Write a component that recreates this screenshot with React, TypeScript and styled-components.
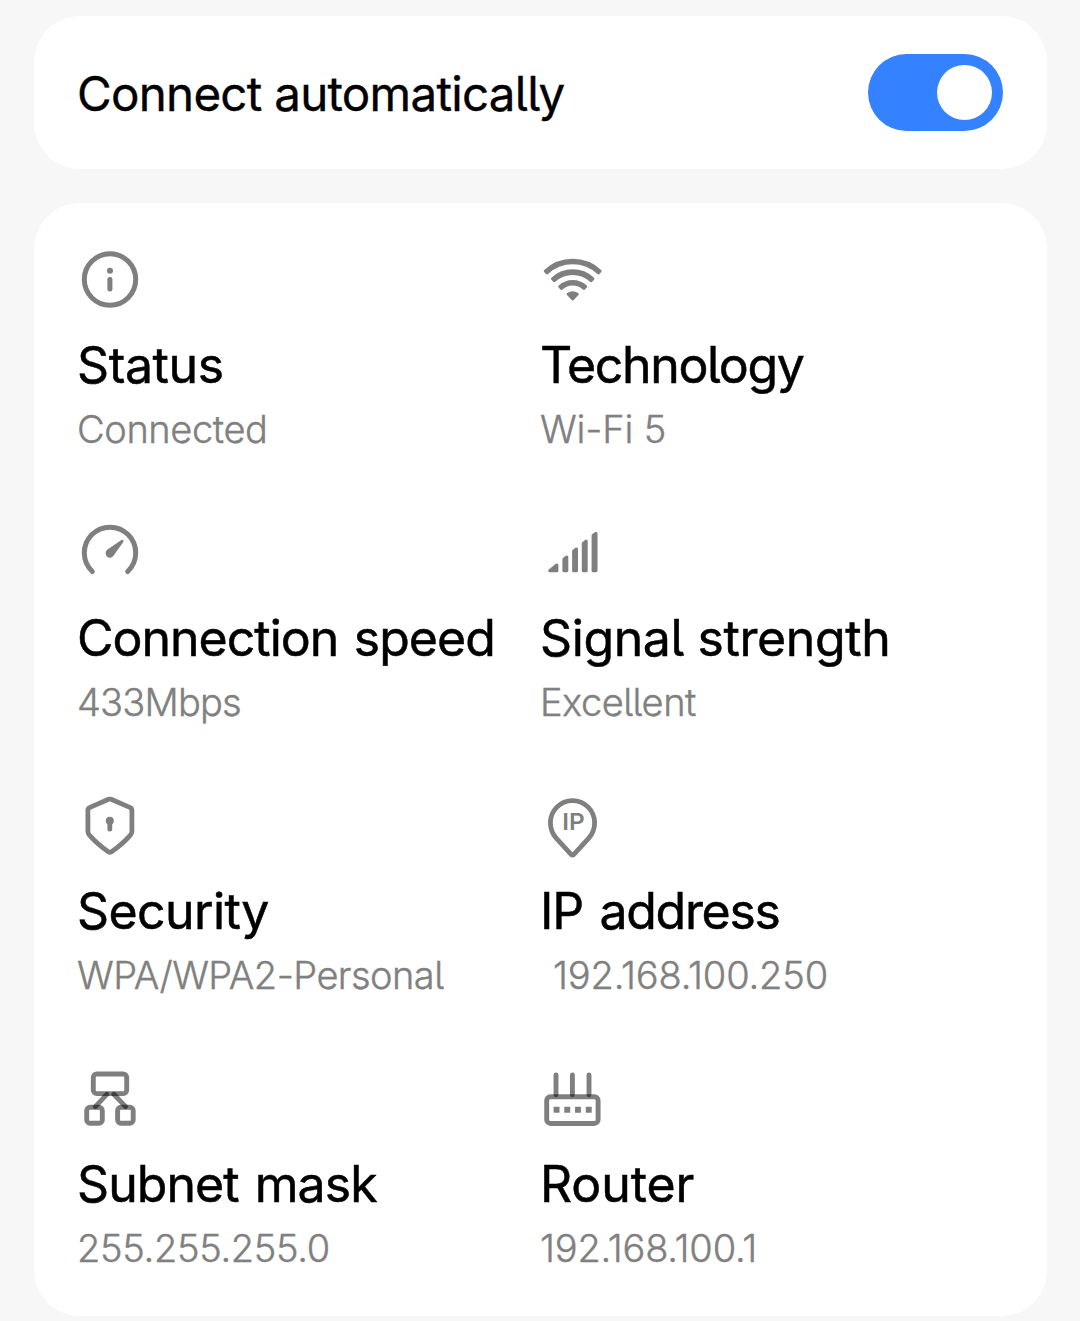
import React, { useState } from "react";
import styled, { createGlobalStyle } from "styled-components";

const GlobalStyle = createGlobalStyle`
  * { box-sizing: border-box; }
  body {
    margin: 0;
    background: #f7f7f7;
    font-family: Inter, "Noto Sans", sans-serif;
    font-feature-settings: "cv05" 1;
  }
`;

const Page = styled.main`
  display: flex;
  flex-direction: column;
  gap: 34px;
  width: 1080px;
  height: 1321px;
  padding: 16px 33.5px 0;
  overflow: hidden;
`;

const Card = styled.section`
  background: #fff;
  border-radius: 46px;
`;

const SwitchRow = styled(Card)`
  display: flex;
  align-items: center;
  justify-content: space-between;
  height: 153px;
  padding: 0 43.5px 1px 43.5px;
`;

const Text = styled.span<{ $tracking?: number; $wordGap?: number }>`
  display: block;
  white-space: pre;
  letter-spacing: ${(p) => p.$tracking ?? 0}px;
  word-spacing: ${(p) => p.$wordGap ?? 0}px;
`;

const RowTitle = styled(Text)`
  padding-top: 4px;
  font-size: 47.5px;
  font-weight: 400;
  line-height: 58px;
  color: #000;
  -webkit-text-stroke: 0.35px #000;
`;

const Toggle = styled.button<{ $on: boolean }>`
  display: flex;
  align-items: center;
  justify-content: ${(p) => (p.$on ? "flex-end" : "flex-start")};
  width: 135px;
  height: 77px;
  padding: 0 11px;
  border: 0;
  border-radius: 39px;
  background: ${(p) => (p.$on ? "#3482ff" : "#e0e0e0")};
`;

const Knob = styled.span`
  width: 55px;
  height: 55px;
  border-radius: 50%;
  background: #fff;
`;

const Details = styled(Card)`
  display: grid;
  grid-template-columns: 463px 1fr;
  grid-auto-rows: 203px;
  row-gap: 70px;
  height: 1113px;
  padding: 45px 0 0 43.5px;
`;

const Item = styled.div`
  display: flex;
  flex-direction: column;
`;

const Icon = styled.svg`
  display: block;
  width: 64px;
  height: 64px;
  margin-left: 1px;
  color: #7f7f7f;
  overflow: visible;
`;

const Label = styled(Text)`
  margin-top: 23px;
  font-size: 50px;
  font-weight: 400;
  line-height: 60px;
  color: #000;
  -webkit-text-stroke: 0.5px #000;
`;

const Value = styled(Text)<{ $indent?: number }>`
  margin-top: 11px;
  padding-left: ${(p) => p.$indent ?? 0}px;
  font-size: 38px;
  font-weight: 300;
  line-height: 46px;
  color: #808080;
  -webkit-text-stroke: 0.4px #808080;
`;

const InfoIcon = () => (
  <Icon viewBox="0 0 64 64" fill="currentColor">
    <circle cx="32" cy="31.5" r="25.7" fill="none" stroke="currentColor" strokeWidth="5" />
    <circle cx="32" cy="22.7" r="3" />
    <rect x="29.4" y="29" width="5" height="14.6" rx="2.3" />
  </Icon>
);

/* Annular segment centred on the vertical axis above (cx, cy). */
function band(cx: number, cy: number, inner: number, outer: number, angle: number) {
  const s = Math.sin(angle);
  const c = Math.cos(angle);
  return `M${cx - outer * s} ${cy - outer * c}A${outer} ${outer} 0 0 1 ${cx + outer * s} ${cy - outer * c}L${cx + inner * s} ${cy - inner * c}A${inner} ${inner} 0 0 0 ${cx - inner * s} ${cy - inner * c}Z`;
}

const WifiIcon = () => (
  <Icon viewBox="0 0 64 64" fill="currentColor" stroke="currentColor" strokeWidth="2.8" strokeLinejoin="round">
    {[39, 28.4, 17.8].map((r) => (
      <path key={r} d={band(31.7, 52.5, r - 1.4, r + 1.4, 0.75)} />
    ))}
    <path d="M27 46.1Q31.7 43.2 36.4 46.1L31.7 50.9Z" />
  </Icon>
);

const SpeedIcon = () => (
  <Icon viewBox="0 0 64 64" fill="currentColor">
    <path d="M14.3 50.5A25.7 25.7 0 1 1 49.7 50.5" fill="none" stroke="currentColor" strokeWidth="5" strokeLinecap="round" />
    <path d="M43.4 19C44.8 18.1 46.3 19.7 45.3 21.1L35.3 34.9C33.7 37 30.7 37.3 28.9 35.4C27.1 33.5 27.2 30.4 29.5 28.6Z" />
  </Icon>
);

const SIGNAL_BARS = [
  [21.4, 34.3],
  [31.1, 26.3],
  [40.8, 18.4],
  [50.6, 10.6],
];

const SignalIcon = () => (
  <Icon viewBox="0 0 64 64" fill="currentColor" stroke="currentColor" strokeWidth="3.2" strokeLinejoin="round">
    <path d="M8.8 49.7L15.8 44.1V49.7Z" />
    {SIGNAL_BARS.map(([x, top]) => (
      <path key={x} d={`M${x + 1.6} ${top + 4}L${x + 4.3} ${top + 1.8}V49.7H${x + 1.6}Z`} />
    ))}
  </Icon>
);

const ShieldIcon = () => (
  <Icon viewBox="0 0 64 64" fill="currentColor">
    <path
      d="M30.6 5.3Q31.9 4.8 33.2 5.3L52.3 13.6Q53.9 14.4 53.9 16.2V37.2Q53.9 39.6 52.4 41.2Q43.5 51.2 33.5 57.7Q31.9 58.7 30.3 57.7Q20.3 51.2 11.4 41.2Q9.9 39.6 9.9 37.2V16.2Q9.9 14.4 11.5 13.6Z"
      fill="none"
      stroke="currentColor"
      strokeWidth="4.8"
      strokeLinejoin="round"
    />
    <circle cx="31.8" cy="26.8" r="4" />
    <rect x="29.4" y="27" width="4.8" height="10.4" rx="1.8" />
  </Icon>
);

const PinText = styled.text`
  font-size: 23px;
  font-weight: 600;
`;

const IpIcon = () => (
  <Icon viewBox="0 0 64 64" fill="currentColor">
    <path
      d="M31.5 61.2Q30.9 61.2 30.3 60.6L15.2 44.2C11.3 39.8 9.4 34.6 9.4 28.8A22.1 22.1 0 0 1 53.6 28.8C53.6 34.6 51.7 39.8 47.8 44.2L32.7 60.6Q32.1 61.2 31.5 61.2Z"
      fill="none"
      stroke="currentColor"
      strokeWidth="4.8"
      strokeLinejoin="round"
    />
    <PinText x="21.2" y="36.2" textLength="22.4" lengthAdjust="spacingAndGlyphs">IP</PinText>
  </Icon>
);

const SubnetIcon = () => (
  <Icon viewBox="0 0 64 64" fill="none" stroke="#000" strokeOpacity="0.5" strokeWidth="4.9">
    <rect x="15.3" y="7" width="33.4" height="19.6" rx="3.4" />
    <rect x="8.7" y="40.3" width="15.6" height="16" rx="3.4" />
    <rect x="39.6" y="40.3" width="15.6" height="16" rx="3.4" />
    <path d="M28.8 27.3L17.4 39.6M35.8 27.3L47.6 39.6" strokeLinecap="round" />
  </Icon>
);

const RouterIcon = () => (
  <Icon viewBox="0 0 64 64" fill="none" stroke="#000" strokeOpacity="0.5" strokeWidth="4.9">
    <rect x="5.7" y="29.7" width="51.4" height="26.8" rx="3.8" />
    <path d="M15 8V27.8M31.4 8V27.8M48 8V27.8" strokeLinecap="round" />
    {[12.6, 23.3, 34, 44.8].map((x) => (
      <rect key={x} x={x} y="39.8" width="5.9" height="5.9" rx="0.5" fill="#000" fillOpacity="0.5" stroke="none" />
    ))}
  </Icon>
);

interface Detail {
  icon: React.FC;
  label: string;
  value: string;
  labelTracking?: number;
  labelWordGap?: number;
  valueTracking?: number;
  indent?: number;
}

const DETAILS: Detail[] = [
  { icon: InfoIcon, label: "Status", value: "Connected", labelTracking: -0.4, valueTracking: -0.4 },
  { icon: WifiIcon, label: "Technology", value: "Wi-Fi 5", labelTracking: -1.35, valueTracking: -0.15 },
  { icon: SpeedIcon, label: "Connection speed", value: "433Mbps", labelTracking: -1.0, labelWordGap: 2.5, valueTracking: -0.8 },
  { icon: SignalIcon, label: "Signal strength", value: "Excellent", labelTracking: -0.4, valueTracking: -0.5 },
  { icon: ShieldIcon, label: "Security", value: "WPA/WPA2-Personal", labelTracking: -0.6, valueTracking: -0.55 },
  { icon: IpIcon, label: "IP address", value: "192.168.100.250", labelTracking: -1.3, labelWordGap: 4, valueTracking: -0.15, indent: 13 },
  { icon: SubnetIcon, label: "Subnet mask", value: "255.255.255.0", labelTracking: -0.95, labelWordGap: 3, valueTracking: -0.3 },
  { icon: RouterIcon, label: "Router", value: "192.168.100.1", labelTracking: -0.1, valueTracking: -0.2 },
];

export default function App() {
  const [auto, setAuto] = useState(true);
  return (
    <>
      <GlobalStyle />
      <Page>
        <SwitchRow>
          <RowTitle $tracking={-0.73}>Connect automatically</RowTitle>
          <Toggle $on={auto} role="switch" aria-checked={auto} onClick={() => setAuto(!auto)}>
            <Knob />
          </Toggle>
        </SwitchRow>
        <Details>
          {DETAILS.map(({ icon: Glyph, ...d }) => (
            <Item key={d.label}>
              <Glyph />
              <Label $tracking={d.labelTracking} $wordGap={d.labelWordGap}>
                {d.label}
              </Label>
              <Value $tracking={d.valueTracking} $indent={d.indent}>
                {d.value}
              </Value>
            </Item>
          ))}
        </Details>
      </Page>
    </>
  );
}
